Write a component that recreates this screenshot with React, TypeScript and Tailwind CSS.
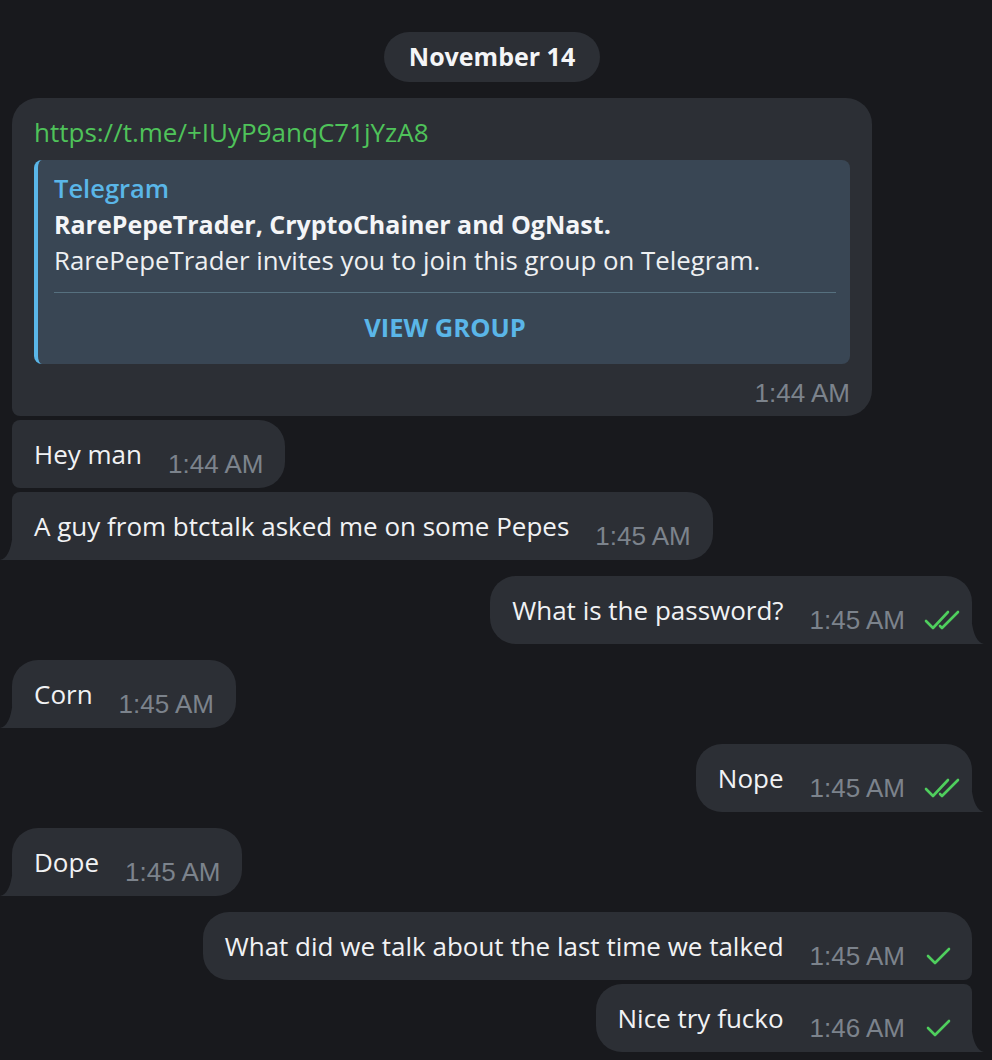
import React from "react";

const TIME = "font-['Liberation_Sans',Arial,sans-serif] text-[26px] leading-[32px] text-[#7c838c]";

function DoubleCheck() {
  return (
    <svg width="38" height="24" viewBox="0 0 38 24" fill="none" className="shrink-0">
      <path d="M2 13 L9 20 L24 4" stroke="#4fce5d" strokeWidth="2.6" strokeLinecap="round" strokeLinejoin="round" />
      <path d="M16 18 L18 20 L34 4" stroke="#4fce5d" strokeWidth="2.6" strokeLinecap="round" strokeLinejoin="round" />
    </svg>
  );
}

function SingleCheck() {
  return (
    <svg width="38" height="24" viewBox="0 0 38 24" fill="none" className="shrink-0">
      <path d="M4 12 L11 19 L25 5" stroke="#4fce5d" strokeWidth="2.6" strokeLinecap="round" strokeLinejoin="round" />
    </svg>
  );
}

function TailLeft() {
  return (
    <svg width="16" height="24" viewBox="0 0 16 24" className="absolute left-[-12px] bottom-0">
      <path d="M16 0 L16 24 L0 24 Q10 22 12.5 0 Z" fill="#2c2f35" />
    </svg>
  );
}

function TailRight() {
  return (
    <svg width="16" height="24" viewBox="0 0 16 24" className="absolute right-[-12px] bottom-0">
      <path d="M0 0 L0 24 L16 24 Q6 22 3.5 0 Z" fill="#2c2f35" />
    </svg>
  );
}

type InProps = { text: string; time: string; rounded: string; tail?: boolean };

function Incoming({ text, time, rounded, tail }: InProps) {
  return (
    <div className="flex justify-start">
      <div className={`relative bg-[#2c2f35] ${rounded} h-[68px] pl-[22px] pr-[22px] flex items-center gap-[26px]`}>
        <span className="text-[26px] leading-[32px] text-[#f1f2f4]">{text}</span>
        <span className={`${TIME} relative top-[10px]`}>{time}</span>
        {tail && <TailLeft />}
      </div>
    </div>
  );
}

type OutProps = { text: string; time: string; rounded: string; tail?: boolean; double?: boolean };

function Outgoing({ text, time, rounded, tail, double }: OutProps) {
  return (
    <div className="flex justify-end">
      <div className={`relative bg-[#2c2f35] ${rounded} h-[68px] pl-[22px] pr-[10px] flex items-center`}>
        <span className="text-[26px] leading-[32px] text-[#f1f2f4]">{text}</span>
        <span className={`${TIME} relative top-[10px] ml-[26px]`}>{time}</span>
        <span className="relative top-[10px] ml-[19px]">
          {double ? <DoubleCheck /> : <SingleCheck />}
        </span>
        {tail && <TailRight />}
      </div>
    </div>
  );
}

export default function App() {
  return (
    <div className="w-[992px] h-[1060px] overflow-hidden bg-[#18191d] font-['Open_Sans','Noto_Sans',sans-serif] pl-[12px] pr-[20px] pt-[32px]">
      <div className="flex justify-center">
        <div className="h-[50px] px-[25px] rounded-full bg-[#2c2f35] flex items-center text-[25px] font-bold text-[#f4f5f7]">
          November 14
        </div>
      </div>

      <div className="mt-[16px] w-[860px] bg-[#2c2f35] rounded-tl-[26px] rounded-tr-[26px] rounded-br-[26px] rounded-bl-[8px] px-[22px] pt-[18px] pb-[7px]">
        <div className="text-[26px] leading-[32px] text-[#4fc35a]">https://t.me/+IUyP9anqC71jYzA8</div>
        <div className="mt-[12px] bg-[#394654] rounded-[8px] border-l-[4px] border-[#5ab6e8] pl-[16px] pr-[14px] pt-[10px]">
          <div className="text-[25.5px] leading-[36px] font-semibold text-[#5ab6e8]">Telegram</div>
          <div className="text-[25px] leading-[36px] font-bold text-[#f4f5f7]">RarePepeTrader, CryptoChainer and OgNast.</div>
          <div className="text-[25.8px] leading-[36px] text-[#eef0f2]">RarePepeTrader invites you to join this group on Telegram.</div>
          <div className="mt-[14px] h-[1px] bg-[#56707f]" />
          <div className="h-[71px] flex items-center justify-center pb-[2px] text-[25.5px] font-bold text-[#5ab6e8]">
            VIEW GROUP
          </div>
        </div>
        <div className="mt-[13px] flex justify-end">
          <span className={TIME}>1:44 AM</span>
        </div>
      </div>

      <div className="mt-[4px] flex flex-col gap-[4px]">
        <Incoming text="Hey man" time="1:44 AM" rounded="rounded-tl-[8px] rounded-bl-[8px] rounded-r-[26px]" />
        <Incoming text="A guy from btctalk asked me on some Pepes" time="1:45 AM" rounded="rounded-tl-[8px] rounded-bl-none rounded-r-[26px]" tail />
      </div>

      <div className="mt-[16px] flex flex-col gap-[16px]">
        <Outgoing text="What is the password?" time="1:45 AM" rounded="rounded-l-[26px] rounded-tr-[26px] rounded-br-none" tail double />
        <Incoming text="Corn" time="1:45 AM" rounded="rounded-r-[26px] rounded-tl-[26px] rounded-bl-none" tail />
        <Outgoing text="Nope" time="1:45 AM" rounded="rounded-l-[26px] rounded-tr-[26px] rounded-br-none" tail double />
        <Incoming text="Dope" time="1:45 AM" rounded="rounded-r-[26px] rounded-tl-[26px] rounded-bl-none" tail />
        <div className="flex flex-col gap-[4px]">
          <Outgoing text="What did we talk about the last time we talked" time="1:45 AM" rounded="rounded-l-[26px] rounded-tr-[26px] rounded-br-[8px]" />
          <Outgoing text="Nice try fucko" time="1:46 AM" rounded="rounded-l-[26px] rounded-tr-[8px] rounded-br-none" tail />
        </div>
      </div>
    </div>
  );
}
